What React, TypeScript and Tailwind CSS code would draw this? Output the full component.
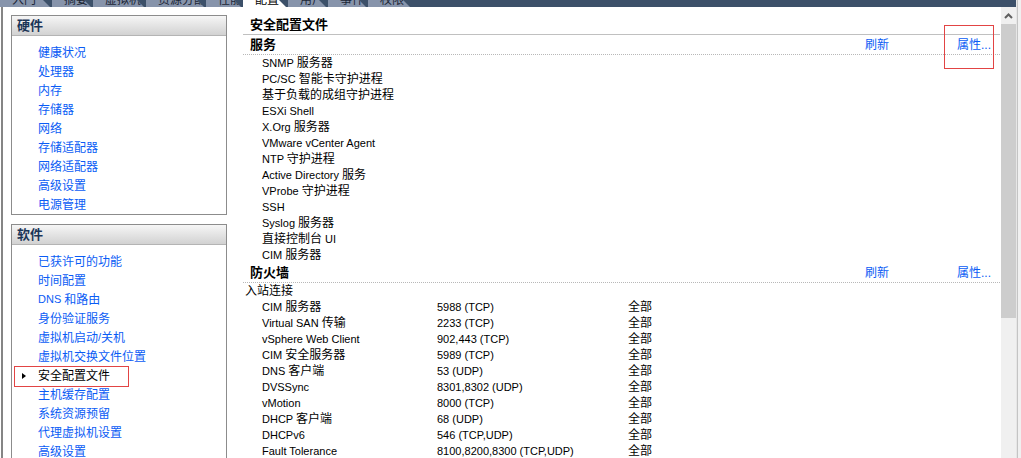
import React from 'react';

const font = "font-['Liberation_Sans','Noto_Sans_CJK_SC',sans-serif]";

const tabs = [
    { label: '入门', w: 52 },
    { label: '摘要', w: 41 },
    { label: '虚拟机', w: 53 },
    { label: '资源分配', w: 60 },
    { label: '性能', w: 37 },
    { label: '配置', w: 45, active: true },
    { label: '用户', w: 40 },
    { label: '事件', w: 40 },
    { label: '权限', w: 44 },
];

const hardware = ['健康状况', '处理器', '内存', '存储器', '网络', '存储适配器', '网络适配器', '高级设置', '电源管理'];

const software = [
    '已获许可的功能',
    '时间配置',
    'DNS 和路由',
    '身份验证服务',
    '虚拟机启动/关机',
    '虚拟机交换文件位置',
    '安全配置文件',
    '主机缓存配置',
    '系统资源预留',
    '代理虚拟机设置',
    '高级设置',
];

const services = [
    'SNMP 服务器',
    'PC/SC 智能卡守护进程',
    '基于负载的成组守护进程',
    'ESXi Shell',
    'X.Org 服务器',
    'VMware vCenter Agent',
    'NTP 守护进程',
    'Active Directory 服务',
    'VProbe 守护进程',
    'SSH',
    'Syslog 服务器',
    '直接控制台 UI',
    'CIM 服务器',
];

const firewall = [
    ['CIM 服务器', '5988 (TCP)'],
    ['Virtual SAN 传输', '2233 (TCP)'],
    ['vSphere Web Client', '902,443 (TCP)'],
    ['CIM 安全服务器', '5989 (TCP)'],
    ['DNS 客户端', '53 (UDP)'],
    ['DVSSync', '8301,8302 (UDP)'],
    ['vMotion', '8000 (TCP)'],
    ['DHCP 客户端', '68 (UDP)'],
    ['DHCPv6', '546 (TCP,UDP)'],
    ['Fault Tolerance', '8100,8200,8300 (TCP,UDP)'],
];

// Chinese glyphs are 12px, latin text is a bit smaller (11px)
const Mixed: React.FC<{ text: string }> = ({ text }) => (
    <>
        {text.split(/([\u4e00-\u9fff]+)/).filter(Boolean).map((part, i) =>
            /[\u4e00-\u9fff]/.test(part) ? (
                <span key={i} className="text-[12px]">{part}</span>
            ) : (
                <span key={i} className="text-[11px] whitespace-pre">{part}</span>
            )
        )}
    </>
);

const Panel: React.FC<{ title: string; items: string[]; selected?: string }> = ({ title, items, selected }) => (
    <div className="w-[216px] border border-[#8c8c8c] bg-white">
        <div className="h-[20px] flex items-center pl-[5px] border-b border-[#b4b4b4] bg-gradient-to-b from-[#f6f6f6] to-[#d2d2d2]">
            <span className="text-[13px] font-bold text-[#1b3557] leading-none">{title}</span>
        </div>
        <div className="pt-[7px]">
            {items.map(item =>
                item === selected ? (
                    <div key={item} className="relative h-[19px] flex items-center pl-[26px] text-black">
                        <div className="absolute left-[2px] top-0 w-[115px] h-[21px] border border-[#e24444]" />
                        <div className="absolute left-[10px] top-[7px] w-0 h-0 border-y-[3px] border-y-transparent border-l-[4px] border-l-black" />
                        <Mixed text={item} />
                    </div>
                ) : (
                    <div key={item} className="h-[19px] flex items-center pl-[26px] text-[#0a5cf5]">
                        <Mixed text={item} />
                    </div>
                )
            )}
        </div>
    </div>
);

const SectionHeader: React.FC<{ title: string }> = ({ title }) => (
    <div className="h-[20px] flex items-center border-b border-dotted border-[#b8b8b8] pl-[7px]">
        <span className="text-[13px] font-bold text-black flex-1">{title}</span>
        <span className="text-[12px] text-[#0a5cf5] w-[92px]">刷新</span>
        <span className="text-[12px] text-[#0a5cf5] w-[43px]">属性...</span>
    </div>
);

const App: React.FC = () => {
    return (
        <div className={`${font} flex w-[1021px] h-[458px] overflow-hidden bg-white`}>
            <div className="w-[1016px] flex flex-col">
                {/* Tab bar */}
                <div className="h-[7px] flex bg-[#3c5069] overflow-hidden">
                    {tabs.map(t => (
                        <div
                            key={t.label}
                            style={{ width: t.w }}
                            className={`shrink-0 h-[7px] overflow-hidden pl-[12px] [clip-path:polygon(0_0,calc(100%-9px)_0,calc(100%-2px)_100%,0_100%)] ${t.active ? 'bg-white text-black' : 'bg-[#8794ab] text-[#1c2636]'}`}
                        >
                            <div className="text-[12px] leading-[12px] -mt-[6px] whitespace-nowrap">{t.label}</div>
                        </div>
                    ))}
                </div>

                <div className="flex flex-1 min-h-0">
                    {/* Left column */}
                    <div className="ml-px w-[242px] border-l-2 border-[#858585] pl-[8px] pt-[8px] flex flex-col gap-[9px]">
                        <Panel title="硬件" items={hardware} />
                        <Panel title="软件" items={software} selected="安全配置文件" />
                    </div>

                    {/* Right content */}
                    <div className="relative w-[758px] pr-px pt-[9px]">
                        <div className="h-[19px] flex items-center pl-[7px] border-b border-[#c0c0c0]">
                            <span className="text-[13px] font-bold text-black">安全配置文件</span>
                        </div>
                        <SectionHeader title="服务" />
                        <div>
                            {services.map(s => (
                                <div key={s} className="h-[16px] flex items-center pl-[19px] text-black whitespace-nowrap">
                                    <Mixed text={s} />
                                </div>
                            ))}
                        </div>
                        <SectionHeader title="防火墙" />
                        <div className="h-[16px] flex items-center pl-[2px] text-[12px] text-black">入站连接</div>
                        <div>
                            {firewall.map(([name, port]) => (
                                <div key={name} className="h-[16px] flex items-center text-black whitespace-nowrap">
                                    <span className="pl-[19px] w-[194px] flex items-center"><Mixed text={name} /></span>
                                    <span className="w-[191px] text-[11px]">{port}</span>
                                    <span className="text-[12px]">全部</span>
                                </div>
                            ))}
                        </div>
                        <div className="absolute left-[701px] top-[18px] w-[50px] h-[44px] border border-[#e24444]" />
                    </div>

                    {/* Scrollbar */}
                    <div className="w-[15px] bg-[#f0f0f0] flex flex-col">
                        <div className="h-[17px] flex items-center justify-center">
                            <svg width="9" height="6" viewBox="0 0 9 6">
                                <polyline points="1,5 4.5,1.5 8,5" fill="none" stroke="#606060" strokeWidth="2" />
                            </svg>
                        </div>
                        <div className="h-[294px] bg-[#cdcdcd]" />
                    </div>
                </div>
            </div>

            {/* Right edge */}
            <div className="flex w-[5px]">
                <div className="w-px bg-[#e6e6e6]" />
                <div className="w-px bg-[#c4c4c4]" />
                <div className="w-[3px] bg-[#f0f0f0]" />
            </div>
        </div>
    );
};

export default App;
